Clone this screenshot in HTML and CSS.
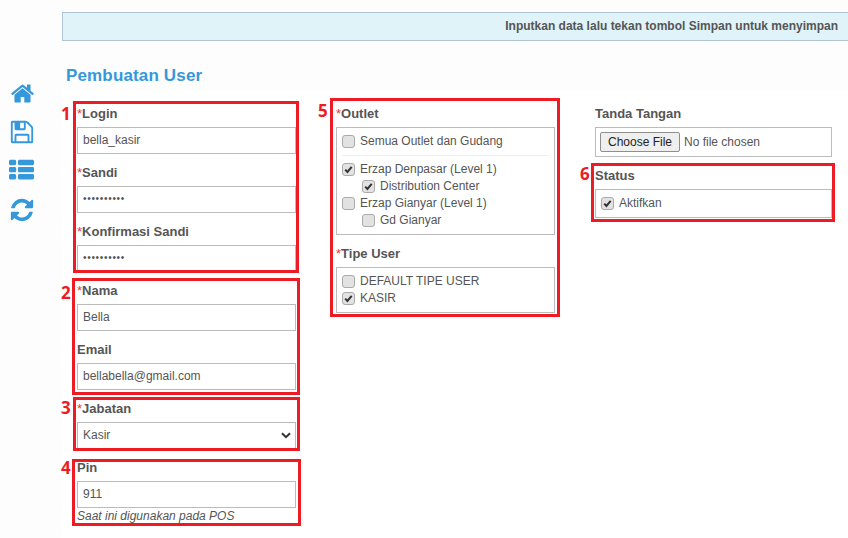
FILE: index.html
```html
<!DOCTYPE html>
<html lang="id">
<head>
<meta charset="utf-8">
<title>Pembuatan User</title>
<link rel="stylesheet" href="styles.css">
</head>
<body>
<div class="page">
  <nav class="side">
    <svg class="ico ico-home" viewBox="0 0 1792 1792"><path d="M1472 992v480q0 26-19 45t-45 19h-384v-384h-256v384h-384q-26 0-45-19t-19-45v-480q0-1 .5-3t.5-3l575-474 575 474q1 2 1 6zm223-69l-62 74q-8 9-21 11h-3q-13 0-21-7l-692-577-692 577q-12 8-24 7-13-2-21-11l-62-74q-8-10-7-23.5t11-21.5l719-599q32-26 76-26t76 26l244 204v-195q0-14 9-23t23-9h192q14 0 23 9t9 23v408l219 182q10 8 11 21.5t-7 23.5z"/></svg>
    <svg class="ico ico-save" viewBox="0 0 1792 1792"><path d="M512 1536h768v-384h-768v384zm896 0h128v-896q0-14-10-38.5t-20-34.5l-281-281q-10-10-34-20t-39-10v416q0 40-28 68t-68 28h-576q-40 0-68-28t-28-68v-416h-128v1280h128v-416q0-40 28-68t68-28h832q40 0 68 28t28 68v416zm-384-928v-320q0-13-9.5-22.5t-22.5-9.5h-192q-13 0-22.5 9.5t-9.5 22.5v320q0 13 9.5 22.5t22.5 9.5h192q13 0 22.5-9.5t9.5-22.5zm640 32v928q0 40-28 68t-68 28h-1344q-40 0-68-28t-28-68v-1344q0-40 28-68t68-28h928q40 0 88 20t76 48l280 280q28 28 48 76t20 88z"/></svg>
    <svg class="ico ico-list" viewBox="0 0 1792 1792"><path d="M512 1248v192q0 40-28 68t-68 28h-320q-40 0-68-28t-28-68v-192q0-40 28-68t68-28h320q40 0 68 28t28 68zm0-512v192q0 40-28 68t-68 28h-320q-40 0-68-28t-28-68v-192q0-40 28-68t68-28h320q40 0 68 28t28 68zm1280 512v192q0 40-28 68t-68 28h-960q-40 0-68-28t-28-68v-192q0-40 28-68t68-28h960q40 0 68 28t28 68zm-1280-1024v192q0 40-28 68t-68 28h-320q-40 0-68-28t-28-68v-192q0-40 28-68t68-28h320q40 0 68 28t28 68zm1280 512v192q0 40-28 68t-68 28h-960q-40 0-68-28t-28-68v-192q0-40 28-68t68-28h960q40 0 68 28t28 68zm0-512v192q0 40-28 68t-68 28h-960q-40 0-68-28t-28-68v-192q0-40 28-68t68-28h960q40 0 68 28t28 68z"/></svg>
    <svg class="ico ico-refresh" viewBox="0 0 1792 1792"><path d="M1639 1056q0 5-1 7-64 268-268 434.5t-478 166.5q-146 0-282.5-55t-243.5-157l-129 129q-19 19-45 19t-45-19-19-45v-448q0-26 19-45t45-19h448q26 0 45 19t19 45-19 45l-137 137q71 66 161 102t187 36q134 0 250-65t186-179q11-17 53-117 8-23 30-23h192q13 0 22.5 9.5t9.5 22.5zm25-800v448q0 26-19 45t-45 19h-448q-26 0-45-19t-19-45 19-45l138-138q-148-137-349-137-134 0-250 65t-186 179q-11 17-53 117-8 23-30 23h-199q-13 0-22.5-9.5t-9.5-22.5v-7q65-268 270-434.5t480-166.5q146 0 284 55.5t245 156.5l130-129q19-19 45-19t45 19 19 45z"/></svg>
  </nav>
  <main class="main">
    <div class="banner">Inputkan data lalu tekan tombol Simpan untuk menyimpan</div>
    <h1 class="title">Pembuatan User</h1>
    <form class="panel">
      <div class="col">
        <label class="lbl"><span class="req">*</span>Login</label>
        <input class="inp" type="text" value="bella_kasir">
        <label class="lbl"><span class="req">*</span>Sandi</label>
        <input class="inp pw" type="password" value="1234567890">
        <label class="lbl"><span class="req">*</span>Konfirmasi Sandi</label>
        <input class="inp pw" type="password" value="1234567890">
        <label class="lbl"><span class="req">*</span>Nama</label>
        <input class="inp" type="text" value="Bella">
        <label class="lbl">Email</label>
        <input class="inp" type="text" value="bellabella@gmail.com">
        <label class="lbl"><span class="req">*</span>Jabatan</label>
        <select class="inp sel"><option>Kasir</option></select>
        <label class="lbl">Pin</label>
        <input class="inp" type="text" value="911">
        <div class="help">Saat ini digunakan pada POS</div>
      </div>
      <div class="col">
        <label class="lbl"><span class="req">*</span>Outlet</label>
        <div class="box box-outlet">
          <label class="chk"><input type="checkbox">Semua Outlet dan Gudang</label>
          <hr class="sep">
          <label class="chk"><input type="checkbox" checked>Erzap Denpasar (Level 1)</label>
          <label class="chk sub"><input type="checkbox" checked>Distribution Center</label>
          <label class="chk"><input type="checkbox">Erzap Gianyar (Level 1)</label>
          <label class="chk sub"><input type="checkbox">Gd Gianyar</label>
        </div>
        <label class="lbl"><span class="req">*</span>Tipe User</label>
        <div class="box box-tipe">
          <label class="chk"><input type="checkbox">DEFAULT TIPE USER</label>
          <label class="chk"><input type="checkbox" checked>KASIR</label>
        </div>
      </div>
      <div class="col">
        <label class="lbl">Tanda Tangan</label>
        <div class="box box-file"><input class="file" type="file"></div>
        <label class="lbl">Status</label>
        <div class="box box-status">
          <label class="chk"><input type="checkbox" checked>Aktifkan</label>
        </div>
      </div>
    </form>
  </main>

  <div class="mark m1"><span class="num">1</span></div>
  <div class="mark m2"><span class="num">2</span></div>
  <div class="mark m3"><span class="num">3</span></div>
  <div class="mark m4"><span class="num">4</span></div>
  <div class="mark m5"><span class="num">5</span></div>
  <div class="mark m6"><span class="num">6</span></div>
</div>
</body>
</html>
```
FILE: styles.css
```css
* { box-sizing: border-box; }
html, body { margin: 0; height: 100%; overflow: hidden; }
body {
  background: #fdfdfd;
  font-family: "Liberation Sans", Arial, sans-serif;
  font-size: 12px;
  color: #555;
}
.page { position: relative; display: flex; width: 848px; height: 538px; }
.side {
  width: 62px;
  flex: none;
  display: flex;
  flex-direction: column;
  align-items: flex-start;
  padding: 81px 0 0 9px;
}
.ico { fill: #3498db; display: block; }
.ico-home { width: 25px; height: 25px; margin-left: 1px; margin-bottom: 13px; }
.ico-save { width: 26px; height: 26px; margin-bottom: 13px; }
.ico-list { width: 25px; height: 25px; margin-bottom: 14px; }
.ico-refresh { width: 26px; height: 26px; }
.main { flex: 1; min-width: 0; padding-top: 12px; }
.banner {
  height: 29px;
  line-height: 27px;
  background: #e0f3f9;
  border: 1px solid #b0c4d8;
  border-right: 0;
  text-align: right;
  padding-right: 10px;
  font-weight: bold;
}
.title {
  margin: 0;
  height: 49px;
  padding: 25px 0 0 4px;
  font-size: 17px;
  line-height: 20px;
  font-weight: bold;
  color: #3498db;
  letter-spacing: 0.15px;
}
.panel {
  background: #fff;
  height: 448px;
  padding: 5px 0 0 15px;
  display: grid;
  grid-template-columns: 219px 219px 237px;
  column-gap: 40px;
  align-items: start;
}
.col { display: flex; flex-direction: column; }
.lbl {
  display: block;
  height: 32px;
  padding-top: 11px;
  line-height: 16px;
  font-size: 13px;
  font-weight: bold;
  color: #555;
}
.req { color: #e33; font-weight: normal; }
.inp {
  display: block;
  width: 219px;
  height: 27px;
  padding: 0 5px 2px;
  border: 1px solid #bbb;
  border-radius: 0;
  background: #fff;
  font: 12px "Liberation Sans", Arial, sans-serif;
  color: #555;
  outline: 0;
}
.pw { font-size: 10px; letter-spacing: 0.7px; }
.sel {
  appearance: none;
  -webkit-appearance: none;
  padding: 0 0 2px 5px;
  background: #fff url("data:image/svg+xml,%3Csvg xmlns='http://www.w3.org/2000/svg' width='10' height='7' viewBox='0 0 10 7'%3E%3Cpath d='M1 1.2l4 4 4-4' fill='none' stroke='%23333' stroke-width='2'/%3E%3C/svg%3E") no-repeat right 4px center;
}
.help { font-style: italic; font-size: 12px; line-height: 16px; height: 16px; color: #555; }
.box { border: 1px solid #bbb; background: #fff; }
.box-outlet { height: 108px; padding: 5px 5px 0; }
.box-tipe { height: 46px; padding: 5px 5px 0; }
.box-file { height: 30px; padding: 4px 4px 0; }
.box-status { height: 29px; padding: 5px 5px 0; }
.chk {
  display: flex;
  align-items: center;
  height: 17px;
  line-height: 17px;
  color: #555;
}
.chk.sub { padding-left: 20px; }
.chk input {
  appearance: none;
  -webkit-appearance: none;
  flex: none;
  width: 13px;
  height: 13px;
  margin: 0 5px 0 0;
  border: 1px solid #aaa;
  border-radius: 3px;
  background: #e2e2e2;
}
.chk input:checked {
  background: #e2e2e2 url("data:image/svg+xml,%3Csvg xmlns='http://www.w3.org/2000/svg' width='11' height='11' viewBox='0 0 11 11'%3E%3Cpath d='M2.2 5.6l2.2 2.4 4.3-5.2' fill='none' stroke='%23333' stroke-width='2'/%3E%3C/svg%3E") no-repeat center;
}
.sep { height: 1px; border: 0; margin: 5px 0 5px; background: #eee; }
.file { font: 12px "Liberation Sans", Arial, sans-serif; color: #555; width: 228px; }
.file::file-selector-button {
  font: 12px "Liberation Sans", Arial, sans-serif;
  color: #222;
  width: 80px;
  height: 20px;
  margin-right: 4px;
  background: #efefef;
  border: 1px solid #8f8f8f;
  border-radius: 2px;
}
.mark { position: absolute; border: 3px solid #ed1c24; }
.num {
  position: absolute;
  left: -15px;
  top: 2px;
  font: bold 17px/16px "Open Sans", sans-serif;
  color: #ed1c24;
}
.m1 { left: 73px; top: 101px; width: 226px; height: 172px; }
.m2 { left: 72px; top: 278px; width: 228px; height: 117px; }
.m2 .num { left: -14px; top: 4px; }
.m3 { left: 73px; top: 397px; width: 227px; height: 54px; }
.m3 .num { top: 0; }
.m4 { left: 72px; top: 459px; width: 229px; height: 67px; }
.m4 .num { left: -14px; top: -2px; }
.m5 { left: 330px; top: 98px; width: 230px; height: 219px; }
.m6 { left: 591px; top: 163px; width: 244px; height: 59px; }
.m6 .num { left: -14px; top: 0; }
```
